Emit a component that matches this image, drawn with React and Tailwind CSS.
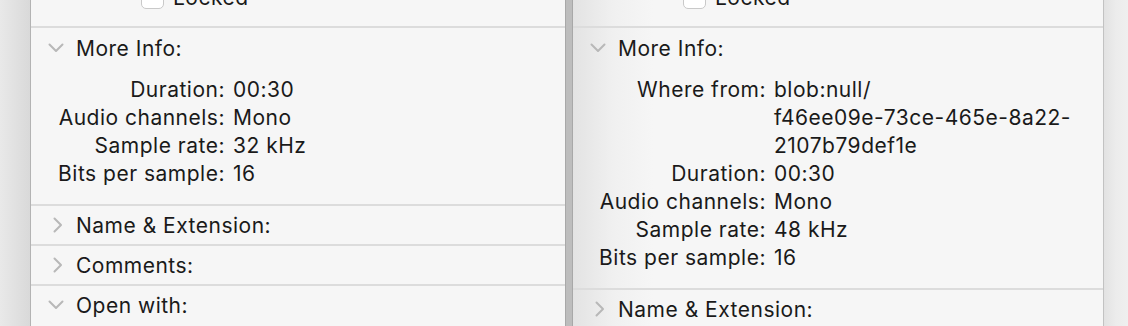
import React from "react";

const font = { fontFamily: "Inter, 'Noto Sans', 'Liberation Sans', sans-serif" };

function ChevronDown() {
  return (
    <svg width="16" height="10" viewBox="0 0 16 10" className="shrink-0">
      <path d="M1.5 1.5 L8 8 L14.5 1.5" fill="none" stroke="#b8b8b8" strokeWidth="2" strokeLinecap="round" strokeLinejoin="round" />
    </svg>
  );
}

function ChevronRight() {
  return (
    <svg width="10" height="16" viewBox="0 0 10 16" className="shrink-0">
      <path d="M1.5 1.5 L8 8 L1.5 14.5" fill="none" stroke="#b8b8b8" strokeWidth="2" strokeLinecap="round" strokeLinejoin="round" />
    </svg>
  );
}

function TopCut() {
  return (
    <div className="h-[28px] overflow-hidden border-b-2 border-[#dcdcdc]">
      <div className="flex items-center -mt-[14px] pl-[110px] gap-[9px]">
        <div className="w-[23px] h-[23px] rounded-[5px] border border-[#c9c9c9] bg-white" />
        <span>Locked</span>
      </div>
    </div>
  );
}

function OpenHeader({ title }) {
  return (
    <div className="h-[40px] flex items-center">
      <div className="w-[45px] flex justify-end pr-[12px]">
        <ChevronDown />
      </div>
      <span>{title}</span>
    </div>
  );
}

function ClosedSection({ title, open }) {
  return (
    <div className="h-[40px] border-t-2 border-[#dcdcdc] flex items-center">
      {open ? (
        <div className="w-[45px] flex justify-end pr-[12px]">
          <ChevronDown />
        </div>
      ) : (
        <div className="w-[45px] flex justify-end pr-[13px]">
          <ChevronRight />
        </div>
      )}
      <span>{title}</span>
    </div>
  );
}

function InfoRows({ rows, labelW }) {
  return (
    <div className="pt-[8px] pb-[16px]">
      {rows.map(([k, v], i) => (
        <div key={i} className="flex leading-[28px]">
          <div className="text-right shrink-0" style={{ width: labelW }}>{k}</div>
          <div className="pl-[8px]">{v}</div>
        </div>
      ))}
    </div>
  );
}

export default function App() {
  return (
    <div className="w-[1128px] h-[326px] overflow-hidden flex text-[21px] tracking-[0.5px] text-[#1a1a1a] leading-none" style={font}>
      <div className="w-[31px] h-full bg-[linear-gradient(to_right,#e9e9e9,#d9d9d9)] border-r border-[#b3b3b3]" />
      <div className="w-[534px] h-full bg-[#f6f6f6]">
        <TopCut />
        <OpenHeader title="More Info:" />
        <InfoRows
          labelW={194}
          rows={[
            ["Duration:", "00:30"],
            ["Audio channels:", "Mono"],
            ["Sample rate:", "32 kHz"],
            ["Bits per sample:", "16"],
          ]}
        />
        <ClosedSection title="Name & Extension:" />
        <ClosedSection title="Comments:" />
        <ClosedSection title="Open with:" open />
      </div>
      <div className="w-[8px] h-full bg-[#bdbdbd] border-l border-r border-[#a8a8a8]" />
      <div className="w-[530px] h-full bg-[linear-gradient(to_right,#e3e3e3,#f0f0f0_40px,#f6f6f6_80px)]">
        <TopCut />
        <OpenHeader title="More Info:" />
        <InfoRows
          labelW={193}
          rows={[
            ["Where from:", <span>blob:null/<br />f46ee09e-73ce-465e-8a22-<br />2107b79def1e</span>],
            ["Duration:", "00:30"],
            ["Audio channels:", "Mono"],
            ["Sample rate:", "48 kHz"],
            ["Bits per sample:", "16"],
          ]}
        />
        <ClosedSection title="Name & Extension:" />
      </div>
      <div className="flex-1 h-full bg-[linear-gradient(to_right,#e2e2e2,#ececec_12px,#efefef)] border-l border-[#c2c2c2]" />
    </div>
  );
}
